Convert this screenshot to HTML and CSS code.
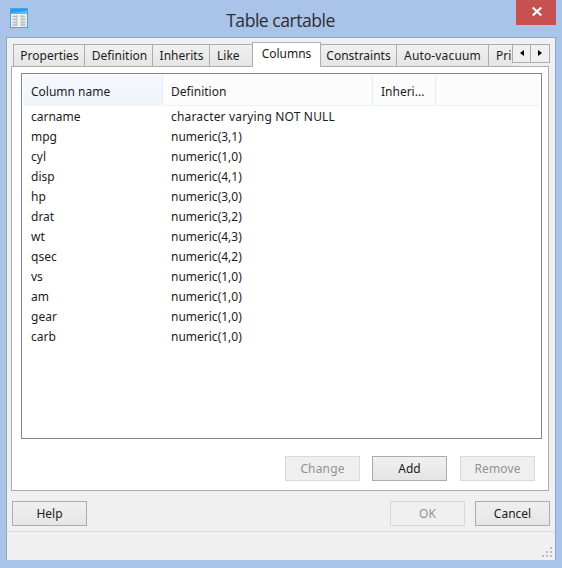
FILE: index.html
```
<!DOCTYPE html>
<html lang="en">
<head>
<meta charset="utf-8">
<title>Table cartable</title>
<link rel="stylesheet" href="styles.css">
</head>
<body>
<div class="window">
  <header class="titlebar">
    <svg class="app-icon" width="18" height="20" viewBox="0 0 18 20">
      <rect x=".5" y=".5" width="17" height="19" fill="#edf2f4" stroke="#43a5e8"/>
      <path d="M1 1h16v5H1z" fill="#5db9f3"/>
      <path d="M1 1h16v1.5L1 5z" fill="#2b9be8"/>
      <path d="M2.5 8.5h5M10.5 8.5h5M2.5 11.5h5M10.5 11.5h5M2.5 14.5h5M10.5 14.5h5M2.5 17h5M10.5 17h5" stroke="#b9b9b9" stroke-width="1.6"/>
      <path d="M6.5 7v10.5M12 7v10.5" stroke="#c2c4c5" stroke-width="1.2"/>
    </svg>
    <h1 class="title">Table cartable</h1>
    <button class="close" aria-label="Close"><svg width="10" height="9" viewBox="0 0 10 9"><path d="M.7 .5l8.6 8M9.3 .5l-8.6 8" stroke="#fff" stroke-width="2.2"/></svg></button>
  </header>
  <main class="client">
    <nav class="tabs">
      <div class="tab properties">Properties</div>
      <div class="tab definition">Definition</div>
      <div class="tab inherits">Inherits</div>
      <div class="tab like">Like</div>
      <div class="tab active">Columns</div>
      <div class="tab constraints">Constraints</div>
      <div class="tab vacuum">Auto-vacuum</div>
      <div class="tab partial">Pri</div>
      <div class="scroll">
        <button class="arrow" aria-label="Left"><svg width="4" height="6" viewBox="0 0 4 6"><path d="M4 0v6L0 3z"/></svg></button>
        <button class="arrow" aria-label="Right"><svg width="4" height="6" viewBox="0 0 4 6"><path d="M0 0v6l4-3z"/></svg></button>
      </div>
    </nav>
    <section class="panel">
      <div class="list">
        <div class="row head"><span class="sorted">Column name</span><span>Definition</span><span>Inheri...</span><span></span></div>
        <div class="row"><span>carname</span><span class="long">character varying NOT NULL</span></div>
        <div class="row"><span>mpg</span><span>numeric(3,1)</span></div>
        <div class="row"><span>cyl</span><span>numeric(1,0)</span></div>
        <div class="row"><span>disp</span><span>numeric(4,1)</span></div>
        <div class="row"><span>hp</span><span>numeric(3,0)</span></div>
        <div class="row"><span>drat</span><span>numeric(3,2)</span></div>
        <div class="row"><span>wt</span><span>numeric(4,3)</span></div>
        <div class="row"><span>qsec</span><span>numeric(4,2)</span></div>
        <div class="row"><span>vs</span><span>numeric(1,0)</span></div>
        <div class="row"><span>am</span><span>numeric(1,0)</span></div>
        <div class="row"><span>gear</span><span>numeric(1,0)</span></div>
        <div class="row"><span>carb</span><span>numeric(1,0)</span></div>
      </div>
      <div class="actions">
        <button class="btn wide" disabled>Change</button>
        <button class="btn">Add</button>
        <button class="btn wide" disabled>Remove</button>
      </div>
    </section>
    <footer class="footer">
      <button class="btn help">Help</button>
      <button class="btn" disabled>OK</button>
      <button class="btn">Cancel</button>
    </footer>
    <div class="status">
      <svg width="10" height="10" viewBox="0 0 10 10" fill="#bdbdbd"><path d="M8 0h2v2H8zM4 4h2v2H4zM8 4h2v2H8zM0 8h2v2H0zM4 8h2v2H4zM8 8h2v2H8z"/></svg>
    </div>
  </main>
</div>
</body>
</html>
```
FILE: styles.css
```
* { box-sizing: border-box; }
body { margin: 0; font: 12px/20px "Noto Sans", "Open Sans", sans-serif; color: #1c1c1c; }
button { font: inherit; color: inherit; margin: 0; padding: 0; }
svg { display: block; }
.window { width: 562px; height: 568px; background: #a9c4e8; padding: 0 6px; overflow: hidden; }
.titlebar { height: 37px; display: grid; grid-template-columns: 46px 1fr 40px; align-items: start; }
.app-icon { margin: 8px 0 0 4px; }
.title { margin: 7px 7px 0 0; font: 400 17.6px/26px "Open Sans", sans-serif; color: #2b2f35; text-align: center; letter-spacing: -.5px; }
.close { width: 40px; height: 25px; border: 0; background: #c75050; display: flex; justify-content: center; align-items: center; padding: 0 0 2px 1px; }
.client { width: 550px; height: 523px; border: 1px solid #8ba8cb; border-bottom: 0; background: #f0f0f0; padding: 4px 5px 0 4px; }
.tabs { height: 24px; display: flex; align-items: flex-end; padding-left: 2px; position: relative; z-index: 1; }
.tab { height: 22px; border: 1px solid #acacac; border-bottom: 0; background: linear-gradient(#f1f1f1, #e5e5e5); text-align: center; line-height: 22px; white-space: nowrap; flex: none; margin-right: -1px; }
.properties { width: 72px; padding-left: 1px; }
.definition { width: 69px; padding-left: 2px; }
.inherits { width: 58px; padding-left: 1px; }
.like { width: 44px; text-align: left; padding-left: 7px; }
.active { width: 69px; height: 25px; background: #fff; margin-bottom: -1px; line-height: 22px; }
.constraints { width: 77px; }
.vacuum { width: 93px; letter-spacing: .15px; }
.partial { width: 25px; padding-left: 7px; text-align: left; border-right: 0; overflow: hidden; }
.scroll { display: flex; height: 19px; margin-bottom: 3px; position: relative; }
.arrow { width: 19px; height: 19px; border: 1px solid #acacac; background: #f0f0f0; display: flex; align-items: center; justify-content: center; padding-bottom: 2px; }
.arrow + .arrow { margin-left: -1px; width: 20px; }
.panel { height: 425px; border: 1px solid #acacac; background: #fff; padding: 6px 7px 0 9px; width: 538px; }
.list { height: 366px; width: 521px; border: 1px solid #828790; padding: 1px; }
.row { display: grid; grid-template-columns: 140px 210px 63px 1fr; height: 20px; }
.row span { padding-left: 8px; white-space: nowrap; }
.row .long { letter-spacing: .17px; }
.head { height: 31px; line-height: 33px; border-bottom: 1px solid #edf3fa; background: #fcfcfc; margin-bottom: 1px; }
.head span { border-right: 1px solid #e2edf8; height: 30px; }
.head span:last-child { border: 0; }
.head .sorted { background: linear-gradient(#f5f9fe, #f0f4fb); margin-left: 1px; padding-left: 7px; }
.actions { display: flex; padding: 17px 0 0 264px; gap: 12px; }
.actions .wide:last-child { margin-left: 1px; }
.btn { width: 75px; height: 25px; border: 1px solid #acacac; background: linear-gradient(#f0f0f0, #e5e5e5); line-height: 24px; text-align: center; }
.btn:disabled { border-color: #d9d9d9; background: #efefef; color: #929292; }
.actions .wide { letter-spacing: .15px; }
.footer { display: flex; height: 40px; padding: 10px 0 0 1px; gap: 10px; }
.help { margin-right: auto; }
.status { margin: 0 -5px 0 -4px; height: 29px; border-top: 1px solid #d9d9d9; display: flex; justify-content: flex-end; align-items: flex-end; padding: 0 3px 3px 0; }
```
